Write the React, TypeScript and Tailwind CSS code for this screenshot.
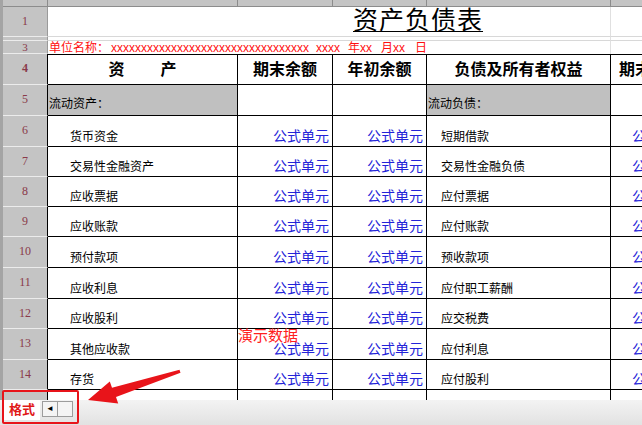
import React from "react";

const sans = "font-[family-name:'Liberation_Sans','Noto_Sans_CJK_SC',sans-serif]";

type DataRow = { n: number; h: string; left: string; right: string };

const dataRows: DataRow[] = [
  { n: 6, h: "h-[31px]", left: "货币资金", right: "短期借款" },
  { n: 7, h: "h-[30px]", left: "交易性金融资产", right: "交易性金融负债" },
  { n: 8, h: "h-[30px]", left: "应收票据", right: "应付票据" },
  { n: 9, h: "h-[30px]", left: "应收账款", right: "应付账款" },
  { n: 10, h: "h-[31px]", left: "预付款项", right: "预收款项" },
  { n: 11, h: "h-[31px]", left: "应收利息", right: "应付职工薪酬" },
  { n: 12, h: "h-[30px]", left: "应收股利", right: "应交税费" },
  { n: 13, h: "h-[31px]", left: "其他应收款", right: "应付利息" },
  { n: 14, h: "h-[30px]", left: "存货", right: "应付股利" },
];

function RowHead({ n, dark, tight }: { n?: number | string; dark?: boolean; tight?: boolean }) {
  return (
    <div
      className={`w-[45px] shrink-0 flex items-center justify-center ${tight ? "text-[11px]" : "pb-[2px] text-[12px]"} bg-[#c4c4c4] border-b border-b-[#ececec] border-r ${
        dark ? "border-r-black" : "border-r-[#9a9a9a]"
      } leading-none text-[#8a3a4a] font-[family-name:'Liberation_Serif',serif] overflow-hidden`}
    >
      {n}
    </div>
  );
}

function Formula() {
  return <span className="text-[14px] leading-none text-[#2323d8]">公式单元</span>;
}

export default function App() {
  return (
    <div className={`relative w-[642px] h-[425px] overflow-hidden bg-white ${sans}`}>
      <div className="flex flex-col h-[400px] border-l-[3px] border-l-[#a4a4a4] overflow-hidden">
        {/* column header strip */}
        <div className="flex h-[7px] shrink-0 bg-[#c4c4c4] border-b border-b-[#8c8c8c]">
          <div className="w-[45px] shrink-0 border-r border-r-[#8c8c8c]" />
          <div className="w-[190px] shrink-0 border-r border-r-[#8c8c8c]" />
          <div className="w-[95px] shrink-0 border-r border-r-[#8c8c8c]" />
          <div className="w-[94px] shrink-0 border-r border-r-[#8c8c8c]" />
          <div className="w-[184px] shrink-0 border-r border-r-[#8c8c8c]" />
          <div className="w-[80px] shrink-0" />
        </div>

        {/* row 1: title */}
        <div className="flex h-[30px] shrink-0">
          <RowHead n={1} />
          <div className="w-[563px] shrink-0 flex items-end pl-[305px] pb-[3px] border-b border-b-[#d8d8d8] border-r border-r-[#e0e0e0]">
            <span className="text-[25px] leading-none tracking-[1px] underline underline-offset-[2px] decoration-1 text-black">
              资产负债表
            </span>
          </div>
          <div className="w-[80px] shrink-0 border-b border-b-[#d8d8d8]" />
        </div>

        {/* row 2: hidden */}
        <div className="flex h-[4px] shrink-0">
          <RowHead />
          <div className="w-[563px] shrink-0 border-b border-b-[#d8d8d8] border-r border-r-[#e0e0e0]" />
          <div className="w-[80px] shrink-0 border-b border-b-[#d8d8d8]" />
        </div>

        {/* row 3: unit name */}
        <div className="flex h-[13px] shrink-0">
          <RowHead n={3} tight />
          <div className="w-[563px] shrink-0 flex items-end pl-px border-r border-r-[#e0e0e0] whitespace-nowrap text-[12px] leading-none text-[#ff1010]">
            <span>单位名称：</span>
            <span className="ml-[2px]">xxxxxxxxxxxxxxxxxxxxxxxxxxxxxxxxx</span>
            <span className="ml-[7px]">xxxx</span>
            <span className="ml-[8px]">年xx</span>
            <span className="ml-[9px]">月xx</span>
            <span className="ml-[10px]">日</span>
          </div>
          <div className="w-[80px] shrink-0" />
        </div>

        {/* row 4: table header */}
        <div className="flex h-[31px] shrink-0 text-[16px] font-bold text-black">
          <RowHead n={4} dark />
          <div className="w-[190px] shrink-0 flex items-center justify-center gap-[36px] border-t border-b border-r border-black">
            <span>资</span>
            <span>产</span>
          </div>
          <div className="w-[95px] shrink-0 flex items-center justify-center border-t border-b border-r border-black">期末余额</div>
          <div className="w-[94px] shrink-0 flex items-center justify-center border-t border-b border-r border-black">年初余额</div>
          <div className="w-[184px] shrink-0 flex items-center justify-center border-t border-b border-r border-black">负债及所有者权益</div>
          <div className="w-[80px] shrink-0 flex items-center justify-center border-t border-b border-black whitespace-nowrap">期末余额</div>
        </div>

        {/* row 5: section titles */}
        <div className="flex h-[31px] shrink-0 text-[12px] text-black">
          <RowHead n={5} dark />
          <div className="w-[190px] shrink-0 flex items-end pl-px pb-[2px] bg-[#c0c0c0] border-b border-r border-black">流动资产：</div>
          <div className="w-[95px] shrink-0 border-b border-r border-black" />
          <div className="w-[94px] shrink-0 border-b border-r border-black" />
          <div className="w-[184px] shrink-0 flex items-end pl-px pb-[2px] bg-[#c0c0c0] border-b border-r border-black">流动负债：</div>
          <div className="w-[80px] shrink-0 border-b border-black" />
        </div>

        {dataRows.map((r) => (
          <div key={r.n} className={`flex ${r.h} shrink-0 text-[12px] text-black`}>
            <RowHead n={r.n} dark />
            <div className="w-[190px] shrink-0 flex items-end pl-[22px] pb-[3px] border-b border-r border-black leading-none">
              {r.left}
            </div>
            <div className="w-[95px] shrink-0 flex items-end justify-end pr-[3px] pb-[3px] border-b border-r border-black">
              <Formula />
            </div>
            <div className="w-[94px] shrink-0 flex items-end justify-end pr-[3px] pb-[3px] border-b border-r border-black">
              <Formula />
            </div>
            <div className="w-[184px] shrink-0 flex items-end pl-[14px] pb-[3px] border-b border-r border-black leading-none">
              {r.right}
            </div>
            <div className="w-[80px] shrink-0 flex items-end justify-end pr-[3px] pb-[3px] border-b border-black whitespace-nowrap">
              <Formula />
            </div>
          </div>
        ))}

        {/* row 15: partly visible */}
        <div className="flex h-[10px] shrink-0">
          <div className="w-[45px] shrink-0 bg-[#c4c4c4] border-r border-r-black" />
          <div className="w-[190px] shrink-0 border-r border-black" />
          <div className="w-[95px] shrink-0 border-r border-black" />
          <div className="w-[94px] shrink-0 border-r border-black" />
          <div className="w-[184px] shrink-0 border-r border-black" />
          <div className="w-[80px] shrink-0" />
        </div>
      </div>

      {/* sheet tab bar */}
      <div className="flex items-start h-[25px] gap-[2px] pl-[4px] bg-gradient-to-b from-[#f3f3f3] to-[#e2e2e2]">
        <div className="h-[20px] w-[36px] flex items-center justify-center bg-white text-[13px] font-bold text-[#e01818]">
          格式
        </div>
        <div className="flex mt-[1px]">
          <div className="w-[16px] h-[16px] flex items-center justify-center bg-[#f4f4f4] border border-[#9c9c9c] text-[8px] leading-none text-black">
            ◄
          </div>
          <div className="w-[15px] h-[16px] bg-[#f4f4f4] border border-l-0 border-[#9c9c9c]" />
        </div>
      </div>

      {/* overlays */}
      <span className="absolute left-[238px] top-[328px] text-[15px] leading-none text-[#ff2020]">演示数据</span>
      <div className="absolute left-[2px] top-[390px] w-[77px] h-[34px] border-2 border-[#e8141a] rounded-[2px]" />
      <svg className="absolute left-0 top-0" width="642" height="425" viewBox="0 0 642 425">
        <polygon
          points="180.5,372.8 179.5,369.8 112.0,387.8 109.8,381.4 88,400 118.2,403.6 116.0,396.9"
          fill="#e8141a"
        />
      </svg>
    </div>
  );
}
